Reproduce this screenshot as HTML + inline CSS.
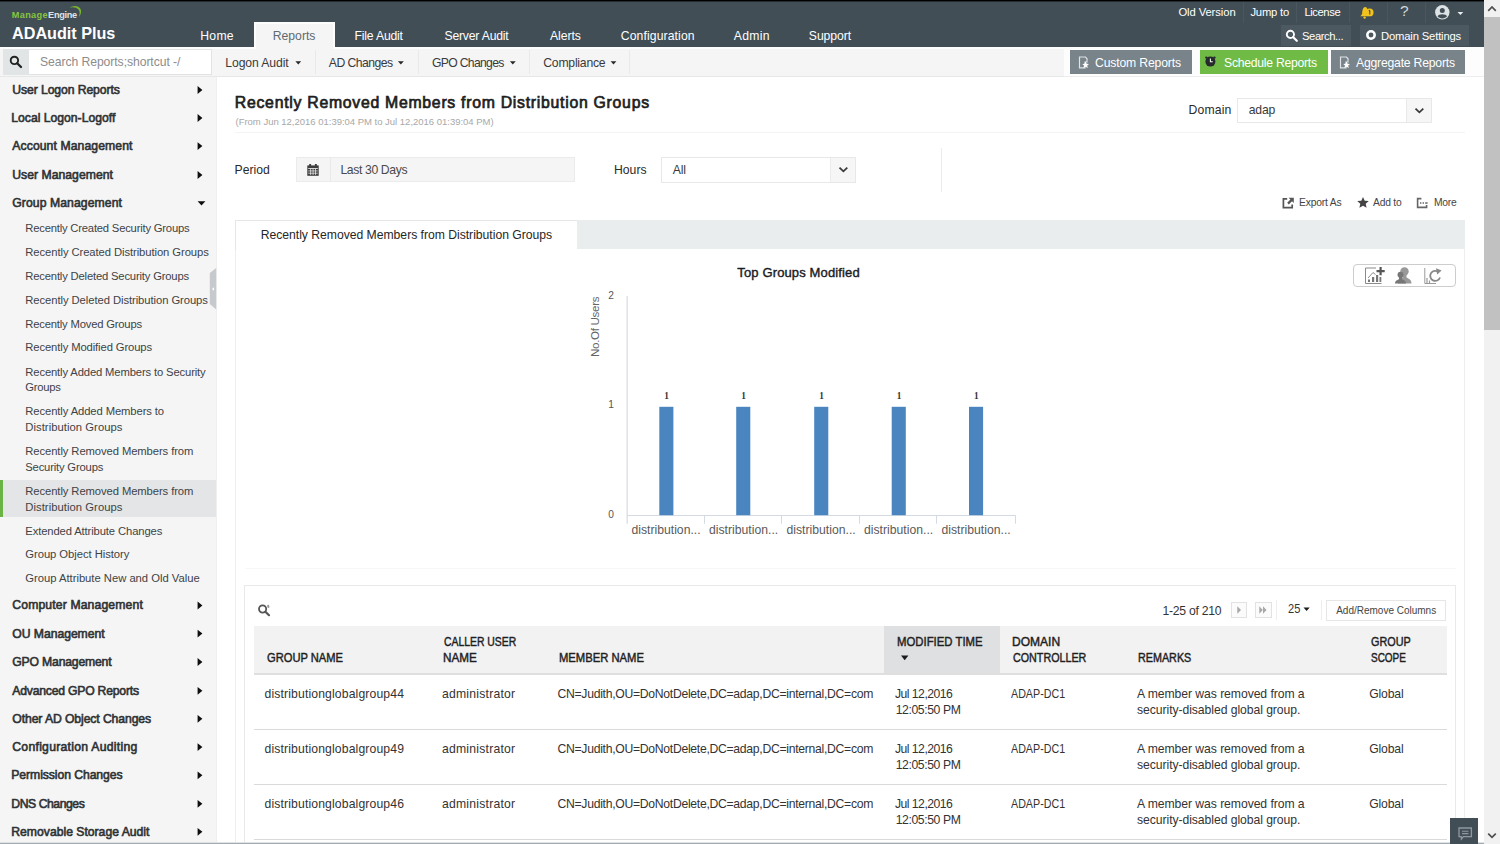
<!DOCTYPE html>
<html lang="en">
<head>
<meta charset="utf-8">
<title>ADAudit Plus - Recently Removed Members from Distribution Groups</title>
<style>
*{box-sizing:border-box;margin:0;padding:0}
html,body{width:1500px;height:844px;overflow:hidden;background:#fff}
body{font-family:"Liberation Sans",sans-serif;font-size:13px;color:#222;position:relative}
.a{position:absolute}
.t{position:absolute;white-space:nowrap;line-height:16px;height:16px}
#topline{left:0;top:0;width:1484px;height:2px;background:linear-gradient(#000 0,#000 50%,#242c31 50%,#242c31 100%)}
#hdr{left:0;top:2px;width:1484px;height:45px;background:#424e56}
#tabact{left:254px;top:22px;width:81px;height:25px;background:#f5f5f5;border:2px solid #fdfdfd;border-bottom:0}
.hs{top:2px;width:1px;height:21px;background:#4a575f}
.hbtn{top:25px;height:21px;background:#4c5961}
#sub{left:0;top:47px;width:1484px;height:30px;background:#f5f5f5;border-top:2px solid #fdfdfd;border-bottom:1px solid #e6e7e8}
.sep{top:50px;width:1px;height:24px;background:#e8e9ea}
.car{width:0;height:0;border-left:3px solid transparent;border-right:3px solid transparent;border-top:3.5px solid #2a2a2a}
.btn{top:50px;height:24px}
#side{left:0;top:77px;width:217px;height:767px;background:#f5f5f5;border-right:1px solid #efefef}
#sel{left:0;top:480px;width:216px;height:37px;background:#e4e5e6;border-left:3px solid #6ab344}
.sa{left:197.6px;width:0;height:0;border-top:3.7px solid transparent;border-bottom:3.7px solid transparent;border-left:4.8px solid #111}
#sbox{left:3px;top:49px;width:209px;height:26px;background:#fff;border:1px solid #e1e3e4}
#sico{left:3px;top:49px;width:26px;height:26px;background:#e2e5e6}
.box{background:#fff;border:1px solid #e8e8e8}
.hl{height:1px;background:#f4f4f4}
#tabbar{left:235px;top:220px;width:1230px;height:29px;background:#e9edee}
#tab1{left:235px;top:220px;width:342px;height:30px;background:#fff;border-left:1px solid #e6e6e6;border-top:1px solid #e6e6e6}
#cpanel{left:235px;top:249px;width:1230px;height:596px;border-left:1px solid #eeeeee;border-right:1px solid #eeeeee}
#tpanel{left:244px;top:585px;width:1212px;height:270px;border:1px solid #e9e9e9}
.rl{left:254px;width:1193px;height:1px;background:#dadada}
#sb{left:1484px;top:0;width:16px;height:844px;background:#f1f1f1}
#sbt{left:1484px;top:17px;width:16px;height:313px;background:#c1c1c1}
</style>
</head>
<body>
<header>
<div class="a" id="hdr"></div>
<div class="a" id="topline"></div>
<div class="a" id="tabact"></div>
<div class="a hs" style="left:1243px"></div><div class="a hs" style="left:1296px"></div><div class="a hs" style="left:1349px"></div><div class="a hs" style="left:1387px"></div><div class="a hs" style="left:1425px"></div>
<div class="a hbtn" style="left:1281px;width:70px"></div>
<div class="a hbtn" style="left:1360px;width:109px"></div>
<svg class="a" style="left:66px;top:4px" width="18" height="16" viewBox="66 4 18 16"><path d="M69.3 7.6 Q74 5.2 77.6 6.4 Q82.4 8.6 80.6 14 Q80 15.8 78.8 17 Q80.6 12.6 78.6 9.6 Q76 6.4 69.3 7.6 Z" fill="#7ab929"/></svg>
<!-- header icons -->
<svg class="a" style="left:1359px;top:5px" width="16" height="16" viewBox="0 0 16 16"><path d="M6.2 2 C3.6 2.6 3.4 5.5 3.2 8 C3.1 9.6 2.2 10.4 1.4 11.2 H9.4 C8.4 9.5 9 7 8.6 5 C8.3 3.4 7.6 2.3 6.2 2 Z" fill="#f2c31c"/><circle cx="5.6" cy="12.6" r="1.2" fill="#f2c31c"/><circle cx="10.6" cy="7.4" r="3.9" fill="#f2c31c"/><path d="M10.8 5.2 V9.6 M9.8 6 L10.8 5.2" stroke="#424e56" stroke-width="1.1" fill="none"/></svg>
<div class="t" style="left:1400px;top:3px;font-size:15.5px;color:#d3d9dc">?</div>
<svg class="a" style="left:1435px;top:5px" width="30" height="15" viewBox="0 0 30 15"><circle cx="7.3" cy="7.3" r="7.2" fill="#dde2e5"/><circle cx="7.3" cy="5.6" r="2.5" fill="#424e56"/><path d="M2.6 11.6 C3.2 8.6 11.4 8.6 12 11.6 C10 14 4.6 14 2.6 11.6 Z" fill="#424e56"/><path d="M22.5 7 H28.3 L25.4 10 Z" fill="#e8ecee"/></svg>
<svg class="a" style="left:1285px;top:29px" width="14" height="14" viewBox="0 0 14 14"><circle cx="5.4" cy="5.4" r="3.6" fill="none" stroke="#fff" stroke-width="1.9"/><path d="M8.2 8.2 L11.8 11.8" stroke="#fff" stroke-width="2.2" stroke-linecap="round"/></svg>
<svg class="a" style="left:1365px;top:29px" width="12" height="12" viewBox="0 0 12 12"><circle cx="6" cy="6" r="3.7" fill="none" stroke="#fff" stroke-width="2.5"/></svg>

<div class="t" style="left:200.30px;top:27.77px;font-size:12.2px;letter-spacing:0.256px;color:#ffffff">Home</div>
<div class="t" style="left:354.50px;top:27.77px;font-size:12.2px;letter-spacing:-0.180px;color:#ffffff">File Audit</div>
<div class="t" style="left:444.50px;top:27.77px;font-size:12.2px;letter-spacing:-0.198px;color:#ffffff">Server Audit</div>
<div class="t" style="left:550.00px;top:27.77px;font-size:12.2px;letter-spacing:-0.052px;color:#ffffff">Alerts</div>
<div class="t" style="left:620.80px;top:27.77px;font-size:12.2px;letter-spacing:0.107px;color:#ffffff">Configuration</div>
<div class="t" style="left:733.80px;top:27.77px;font-size:12.2px;letter-spacing:0.308px;color:#ffffff">Admin</div>
<div class="t" style="left:808.80px;top:27.77px;font-size:12.2px;letter-spacing:-0.050px;color:#ffffff">Support</div>
<div class="t" style="left:272.80px;top:27.77px;font-size:12.2px;letter-spacing:-0.013px;color:#5f6a70">Reports</div>
<div class="t" style="left:1178.40px;top:3.80px;font-size:11.25px;letter-spacing:-0.090px;color:#ffffff">Old Version</div>
<div class="t" style="left:1250.40px;top:3.80px;font-size:11.25px;letter-spacing:-0.193px;color:#ffffff">Jump to</div>
<div class="t" style="left:1304.40px;top:3.80px;font-size:11.25px;letter-spacing:-0.420px;color:#ffffff">License</div>
<div class="t" style="left:1302.00px;top:27.60px;font-size:11.25px;letter-spacing:-0.437px;color:#ffffff">Search...</div>
<div class="t" style="left:1381.00px;top:27.60px;font-size:11.25px;letter-spacing:-0.165px;color:#ffffff">Domain Settings</div>
<div class="t" style="left:11.70px;top:6.61px;font-size:9.2px;letter-spacing:0.341px;color:#86c440;font-weight:bold">Manage</div>
<div class="t" style="left:48.10px;top:6.61px;font-size:9.2px;letter-spacing:-0.323px;color:#dde3e6;font-weight:bold">Engine</div>
<div class="t" style="left:12.10px;top:24.79px;font-size:16.2px;letter-spacing:-0.019px;color:#ffffff;font-weight:bold">ADAudit Plus</div>
</header>
<nav>
<div class="a" id="sub"></div>
<div class="a" style="left:256px;top:47px;width:77px;height:2px;background:#f5f5f5"></div>
<div class="a" id="sbox"></div><div class="a" id="sico"></div>
<svg class="a" style="left:9px;top:55px" width="14" height="14" viewBox="0 0 14 14"><circle cx="5.4" cy="5.4" r="3.7" fill="none" stroke="#222" stroke-width="1.9"/><path d="M8.2 8.2 L12 12" stroke="#222" stroke-width="2.3" stroke-linecap="round"/></svg>
<div class="a sep" style="left:315px"></div><div class="a sep" style="left:418px"></div><div class="a sep" style="left:529px"></div><div class="a sep" style="left:629px"></div>

<div class="a" style="left:1064px;top:47px;width:420px;height:30px;background:#fdfdfd;border-bottom:1px solid #ededed"></div>
<div class="a btn" style="left:1070px;width:122px;background:#78838a"></div>
<div class="a btn" style="left:1200px;width:128px;background:#6fbb45"></div>
<div class="a btn" style="left:1331px;width:134px;background:#78838a"></div>
<svg class="a" style="left:1078px;top:56px" width="12" height="13" viewBox="0 0 12 13"><path d="M1.5 1 H7.5 L9 2.8 V6 H7 V11.8 H1.5 Z" fill="none" stroke="#dfe3e6" stroke-width="1.2"/><path d="M7.6 5.6 L8.6 7.8 L11 8 L9.2 9.6 L9.8 12 L7.6 10.7 L5.4 12 L6 9.6 L4.2 8 L6.6 7.8 Z" fill="#fff"/></svg>
<svg class="a" style="left:1339px;top:56px" width="12" height="13" viewBox="0 0 12 13"><path d="M1.5 1 H7.5 L9 2.8 V6 H7 V11.8 H1.5 Z" fill="none" stroke="#dfe3e6" stroke-width="1.2"/><path d="M7.6 5.6 L8.6 7.8 L11 8 L9.2 9.6 L9.8 12 L7.6 10.7 L5.4 12 L6 9.6 L4.2 8 L6.6 7.8 Z" fill="#fff"/></svg>
<svg class="a" style="left:1204px;top:55px" width="13" height="13" viewBox="0 0 13 13"><circle cx="6.4" cy="6.6" r="5" fill="#26292b"/><circle cx="2.4" cy="2.6" r="1.2" fill="#26292b"/><circle cx="10.4" cy="2.6" r="1.2" fill="#26292b"/><path d="M6.4 3.6 V6.8 H8.8" stroke="#eef6e8" stroke-width="1.1" fill="none"/></svg>

<svg class="a" style="left:290px;top:58px" width="330" height="10" viewBox="290 58 330 10"><path d="M295.4 61.2 H301.2 L298.3 64.6 Z M397.9 61.2 H403.8 L400.85 64.6 Z M509.9 61.2 H515.7 L512.8 64.6 Z M610.6 61.2 H616.4 L613.5 64.6 Z" fill="#2a2a2a"/></svg>
<div class="t" style="left:225.30px;top:54.77px;font-size:12.2px;letter-spacing:-0.097px;color:#3a3a3a">Logon Audit</div>
<div class="t" style="left:328.80px;top:54.77px;font-size:12.2px;letter-spacing:-0.534px;color:#3a3a3a">AD Changes</div>
<div class="t" style="left:432.00px;top:54.77px;font-size:12.2px;letter-spacing:-0.687px;color:#3a3a3a">GPO Changes</div>
<div class="t" style="left:543.30px;top:54.77px;font-size:12.2px;letter-spacing:-0.231px;color:#3a3a3a">Compliance</div>
<div class="t" style="left:40.00px;top:54.27px;font-size:12.2px;letter-spacing:-0.074px;color:#8c8c8c">Search Reports;shortcut -/</div>
<div class="t" style="left:1095.00px;top:54.77px;font-size:12.2px;letter-spacing:-0.150px;color:#ffffff">Custom Reports</div>
<div class="t" style="left:1224.00px;top:54.77px;font-size:12.2px;letter-spacing:-0.252px;color:#ffffff">Schedule Reports</div>
<div class="t" style="left:1356.00px;top:54.77px;font-size:12.2px;letter-spacing:-0.201px;color:#ffffff">Aggregate Reports</div>
</nav>
<aside>
<div class="a" id="side"></div>
<div class="a" id="sel"></div>
<svg class="a" style="left:0;top:0" width="217" height="844" viewBox="0 0 217 844"><path d="M197.6 86.1 L202.4 90.0 L197.6 93.9 Z M197.6 114.1 L202.4 118.0 L197.6 121.9 Z M197.6 142.2 L202.4 146.1 L197.6 150.0 Z M197.6 171.1 L202.4 175.0 L197.6 178.9 Z M197.6 601.6 L202.4 605.5 L197.6 609.4 Z M197.6 629.7 L202.4 633.6 L197.6 637.5 Z M197.6 658.1 L202.4 662.0 L197.6 665.9 Z M197.6 686.9 L202.4 690.8 L197.6 694.7 Z M197.6 714.9 L202.4 718.8 L197.6 722.7 Z M197.6 743.2 L202.4 747.1 L197.6 751.0 Z M197.6 771.4 L202.4 775.3 L197.6 779.2 Z M197.6 799.9 L202.4 803.8 L197.6 807.7 Z M197.6 827.9 L202.4 831.8 L197.6 835.7 Z M197.6 201.3 H205.4 L201.5 205.4 Z" fill="#0f0f0f"/></svg>
<svg class="a" style="left:209px;top:268px" width="8" height="42" viewBox="0 0 8 42"><path d="M7.2 0 L0.8 5 V36 L7.2 41.5 Z" fill="#c6cacd"/><path d="M5 19.2 L3 21 L5 22.8 Z" fill="#fff"/></svg>

<div class="t" style="left:12.30px;top:81.97px;font-size:12.2px;letter-spacing:-0.093px;color:#2f3234;-webkit-text-stroke:0.6px #2f3234">User Logon Reports</div>
<div class="t" style="left:11.30px;top:109.97px;font-size:12.2px;letter-spacing:-0.009px;color:#2f3234;-webkit-text-stroke:0.6px #2f3234">Local Logon-Logoff</div>
<div class="t" style="left:12.30px;top:138.07px;font-size:12.2px;letter-spacing:0.090px;color:#2f3234;-webkit-text-stroke:0.6px #2f3234">Account Management</div>
<div class="t" style="left:12.30px;top:166.97px;font-size:12.2px;letter-spacing:0.024px;color:#2f3234;-webkit-text-stroke:0.6px #2f3234">User Management</div>
<div class="t" style="left:12.30px;top:195.27px;font-size:12.2px;letter-spacing:0.079px;color:#2f3234;-webkit-text-stroke:0.6px #2f3234">Group Management</div>
<div class="t" style="left:12.30px;top:597.47px;font-size:12.2px;letter-spacing:0.136px;color:#2f3234;-webkit-text-stroke:0.6px #2f3234">Computer Management</div>
<div class="t" style="left:12.30px;top:625.57px;font-size:12.2px;letter-spacing:-0.043px;color:#2f3234;-webkit-text-stroke:0.6px #2f3234">OU Management</div>
<div class="t" style="left:12.30px;top:653.97px;font-size:12.2px;letter-spacing:-0.179px;color:#2f3234;-webkit-text-stroke:0.6px #2f3234">GPO Management</div>
<div class="t" style="left:12.30px;top:682.77px;font-size:12.2px;letter-spacing:-0.213px;color:#2f3234;-webkit-text-stroke:0.6px #2f3234">Advanced GPO Reports</div>
<div class="t" style="left:12.30px;top:710.77px;font-size:12.2px;letter-spacing:-0.095px;color:#2f3234;-webkit-text-stroke:0.6px #2f3234">Other AD Object Changes</div>
<div class="t" style="left:12.30px;top:739.07px;font-size:12.2px;letter-spacing:0.274px;color:#2f3234;-webkit-text-stroke:0.6px #2f3234">Configuration Auditing</div>
<div class="t" style="left:11.30px;top:767.27px;font-size:12.2px;letter-spacing:-0.068px;color:#2f3234;-webkit-text-stroke:0.6px #2f3234">Permission Changes</div>
<div class="t" style="left:11.30px;top:795.77px;font-size:12.2px;letter-spacing:-0.441px;color:#2f3234;-webkit-text-stroke:0.6px #2f3234">DNS Changes</div>
<div class="t" style="left:11.30px;top:823.77px;font-size:12.2px;letter-spacing:-0.004px;color:#2f3234;-webkit-text-stroke:0.6px #2f3234">Removable Storage Audit</div>
<div class="t" style="left:25.30px;top:220.10px;font-size:11.25px;letter-spacing:-0.206px;color:#404345">Recently Created Security Groups</div>
<div class="t" style="left:25.30px;top:243.90px;font-size:11.25px;letter-spacing:-0.080px;color:#404345">Recently Created Distribution Groups</div>
<div class="t" style="left:25.30px;top:268.10px;font-size:11.25px;letter-spacing:-0.182px;color:#404345">Recently Deleted Security Groups</div>
<div class="t" style="left:25.30px;top:291.80px;font-size:11.25px;letter-spacing:-0.070px;color:#404345">Recently Deleted Distribution Groups</div>
<div class="t" style="left:25.30px;top:315.90px;font-size:11.25px;letter-spacing:-0.193px;color:#404345">Recently Moved Groups</div>
<div class="t" style="left:25.30px;top:339.30px;font-size:11.25px;letter-spacing:-0.113px;color:#404345">Recently Modified Groups</div>
<div class="t" style="left:25.30px;top:363.90px;font-size:11.25px;letter-spacing:-0.142px;color:#404345">Recently Added Members to Security</div>
<div class="t" style="left:25.30px;top:379.40px;font-size:11.25px;letter-spacing:-0.253px;color:#404345">Groups</div>
<div class="t" style="left:25.30px;top:403.40px;font-size:11.25px;letter-spacing:-0.104px;color:#404345">Recently Added Members to</div>
<div class="t" style="left:25.30px;top:418.90px;font-size:11.25px;letter-spacing:0.046px;color:#404345">Distribution Groups</div>
<div class="t" style="left:25.30px;top:443.40px;font-size:11.25px;letter-spacing:-0.093px;color:#404345">Recently Removed Members from</div>
<div class="t" style="left:25.30px;top:458.90px;font-size:11.25px;letter-spacing:-0.188px;color:#404345">Security Groups</div>
<div class="t" style="left:25.30px;top:483.10px;font-size:11.25px;letter-spacing:-0.093px;color:#404345">Recently Removed Members from</div>
<div class="t" style="left:25.30px;top:498.60px;font-size:11.25px;letter-spacing:0.046px;color:#404345">Distribution Groups</div>
<div class="t" style="left:25.30px;top:522.80px;font-size:11.25px;letter-spacing:-0.124px;color:#404345">Extended Attribute Changes</div>
<div class="t" style="left:25.30px;top:546.40px;font-size:11.25px;letter-spacing:-0.053px;color:#404345">Group Object History</div>
<div class="t" style="left:25.30px;top:570.30px;font-size:11.25px;letter-spacing:-0.017px;color:#404345">Group Attribute New and Old Value</div>
</aside>
<main>
<!-- main -->
<div class="a box" style="left:1237px;top:98px;width:195px;height:25px"></div>
<div class="a" style="left:1406px;top:99px;width:25px;height:23px;background:#f6f6f6;border-left:1px solid #e9e9e9"></div>
<svg class="a" style="left:1413.5px;top:106.5px" width="11" height="8" viewBox="0 0 11 8"><path d="M1.5 1.6 L5.4 5.3 L9.3 1.6" fill="none" stroke="#3a3a3a" stroke-width="1.8"/></svg>
<div class="a hl" style="left:235px;top:132px;width:1230px"></div>
<div class="a" style="left:296px;top:157px;width:279px;height:25px;background:#f5f5f5;border:1px solid #ebebeb"></div>
<div class="a" style="left:330px;top:158px;width:1px;height:23px;background:#e9e9e9"></div>
<svg class="a" style="left:307px;top:164px" width="12" height="12" viewBox="0 0 12 12"><rect x="0.3" y="1.4" width="11.4" height="10.4" fill="#3d3d3d"/><rect x="2.2" y="0" width="1.9" height="3" fill="#3d3d3d"/><rect x="7.9" y="0" width="1.9" height="3" fill="#3d3d3d"/><g fill="#f5f5f5"><rect x="1.2" y="4.2" width="9.6" height="0.8"/><rect x="3.4" y="4.6" width=".7" height="6.4"/><rect x="5.7" y="4.6" width=".7" height="6.4"/><rect x="8" y="4.6" width=".7" height="6.4"/><rect x="1.2" y="6.6" width="9.6" height=".7"/><rect x="1.2" y="8.8" width="9.6" height=".7"/></g></svg>
<div class="a box" style="left:661px;top:157px;width:195px;height:26px"></div>
<div class="a" style="left:830px;top:158px;width:25px;height:24px;background:#f6f6f6;border-left:1px solid #ececec"></div>
<svg class="a" style="left:838px;top:166px" width="11" height="8" viewBox="0 0 11 8"><path d="M1.5 1.6 L5.4 5.3 L9.3 1.6" fill="none" stroke="#3a3a3a" stroke-width="1.8"/></svg>
<div class="a" style="left:941px;top:148px;width:1px;height:44px;background:#ececec"></div>
<!-- action icons -->
<svg class="a" style="left:1282px;top:197px" width="13" height="12" viewBox="0 0 13 12"><path d="M5.2 1.8 H1.4 V10.6 H10.2 V7.4" fill="none" stroke="#555" stroke-width="1.7"/><path d="M6.6 0.8 H11.8 V6 L10 4.2 L6.8 7.4 L5.2 5.8 L8.4 2.6 Z" fill="#555"/></svg>
<svg class="a" style="left:1357px;top:197px" width="12" height="11" viewBox="0 0 12 11"><path d="M6 0 L7.7 3.7 L11.8 4.1 L8.7 6.8 L9.6 10.8 L6 8.7 L2.4 10.8 L3.3 6.8 L0.2 4.1 L4.3 3.7 Z" fill="#444"/></svg>
<svg class="a" style="left:1416px;top:197px" width="13" height="12" viewBox="0 0 13 12"><path d="M5.4 1.6 H1.6 V10.4 H10.6 V8" fill="none" stroke="#666" stroke-width="1.6"/><path d="M4 6 H5.4 M6.6 6 H8 M9.2 6 H11.6" stroke="#666" stroke-width="1.5"/></svg>

<div class="a" id="tabbar"></div><div class="a" id="cpanel"></div><div class="a" id="tab1"></div>
<svg class="a" style="left:580px;top:255px" width="470" height="295" viewBox="580 255 470 295" font-family="Liberation Sans, sans-serif"><text x="737.3" y="276.6" font-size="13" fill="#1a1c24" stroke="#1a1c24" stroke-width="0.4" textLength="122.4" lengthAdjust="spacing">Top Groups Modified</text><text transform="translate(598.6,357) rotate(-90)" font-size="11.6" fill="#666" textLength="60.5" lengthAdjust="spacing">No.Of Users</text><path d="M627.2 296 V523.7" stroke="#dfe3ea" stroke-width="1.6" fill="none"/><path d="M627 515.5 H1015.5 M704.5 515.5 V523.7 M781.5 515.5 V523.7 M859.5 515.5 V523.7 M936.5 515.5 V523.7 M1015.5 515.5 V523.7" stroke="#d3dae3" stroke-width="1" fill="none"/><text x="611.2" y="298.6" text-anchor="middle" font-size="10.2" fill="#555">2</text><text x="611.2" y="407.9" text-anchor="middle" font-size="10.2" fill="#555">1</text><text x="611.2" y="518.4" text-anchor="middle" font-size="10.2" fill="#555">0</text><rect x="659.3" y="406.8" width="14.1" height="108.4" fill="#4a85c0"/><text x="666.6999999999999" y="399" text-anchor="middle" font-size="9.3" font-weight="bold" fill="#333" font-family="Liberation Serif, serif">1</text><rect x="736.2" y="406.8" width="14.1" height="108.4" fill="#4a85c0"/><text x="743.6" y="399" text-anchor="middle" font-size="9.3" font-weight="bold" fill="#333" font-family="Liberation Serif, serif">1</text><rect x="814.2" y="406.8" width="14.1" height="108.4" fill="#4a85c0"/><text x="821.6" y="399" text-anchor="middle" font-size="9.3" font-weight="bold" fill="#333" font-family="Liberation Serif, serif">1</text><rect x="891.7" y="406.8" width="14.1" height="108.4" fill="#4a85c0"/><text x="899.1" y="399" text-anchor="middle" font-size="9.3" font-weight="bold" fill="#333" font-family="Liberation Serif, serif">1</text><rect x="969" y="406.8" width="14.1" height="108.4" fill="#4a85c0"/><text x="976.4" y="399" text-anchor="middle" font-size="9.3" font-weight="bold" fill="#333" font-family="Liberation Serif, serif">1</text><text x="631.4" y="533.9" font-size="12.2" fill="#5a5a5a" textLength="69.2" lengthAdjust="spacing">distribution...</text><text x="709" y="533.9" font-size="12.2" fill="#5a5a5a" textLength="69.2" lengthAdjust="spacing">distribution...</text><text x="786.5" y="533.9" font-size="12.2" fill="#5a5a5a" textLength="69.2" lengthAdjust="spacing">distribution...</text><text x="864" y="533.9" font-size="12.2" fill="#5a5a5a" textLength="69.2" lengthAdjust="spacing">distribution...</text><text x="941.5" y="533.9" font-size="12.2" fill="#5a5a5a" textLength="69.2" lengthAdjust="spacing">distribution...</text></svg>
<div class="a" style="left:1353px;top:264px;width:103px;height:23px;border:1px solid #cdcdcd;border-radius:4px;background:#fff"></div>
<svg class="a" style="left:1364px;top:265.5px" width="80" height="20" viewBox="0 0 80 20"><g fill="none" stroke="#8a8a8a"><path d="M1.5 2 V17.5 H17.5" stroke-width="1"/><path d="M1.5 2 H12" stroke-width="1"/><path d="M4 12 L9 6.5 L11.5 8.5" stroke-width="1"/></g><g fill="#777"><rect x="4" y="13.5" width="2" height="2.5"/><rect x="8" y="11" width="2.2" height="5"/><rect x="12" y="9" width="2.2" height="7"/><rect x="15.5" y="11" width="1.8" height="5"/><path d="M15.5 1 H17.7 V4 H20.7 V6.2 H17.7 V9.2 H15.5 V6.2 H12.5 V4 H15.5 Z" fill="#555"/></g><g fill="#999"><circle cx="40.5" cy="5.5" r="4.2"/><path d="M34 17.5 C34 13 37 12.5 38.5 11.5 V9 H42.5 V11.5 C44 12.5 47.5 13 47.5 17.5 Z"/></g><g fill="#777"><circle cx="36.5" cy="8.8" r="3"/><path d="M31 17.5 C31 14.5 33.5 14 35 13.2 V11 H38 V13.2 C39.5 14 42 14.5 42 17.5 Z"/></g><g fill="none" stroke="#9a9a9a"><path d="M60.8 2 V17.5 H72" stroke-width="1"/><path d="M63 17 V12 M65.5 17 V14.5" stroke-width="1.2"/><path d="M74.6 6.2 A5 5 0 1 0 76 11.5" stroke="#888" stroke-width="1.8"/></g><path d="M72 2.2 L77.6 4.6 L73.2 8.4 Z" fill="#888"/></svg>
<div class="a hl" style="left:245px;top:568px;width:1211px;background:#f7f7f7"></div>
<div class="a" id="tpanel"></div>
<svg class="a" style="left:257px;top:603px" width="15" height="14" viewBox="0 0 15 14"><circle cx="5.6" cy="6" r="3.6" fill="none" stroke="#555" stroke-width="1.8"/><path d="M8.4 8.8 L12 12.2" stroke="#555" stroke-width="2.2" stroke-linecap="round"/><ellipse cx="11.3" cy="3.4" rx="1.1" ry="1.6" fill="#9a9a9a" transform="rotate(-15 11.3 3.4)"/></svg>
<div class="a" style="left:1231px;top:602px;width:16px;height:16px;border:1px solid #e2e2e2;background:#fbfbfb"></div>
<div class="a" style="left:1255px;top:602px;width:17px;height:16px;border:1px solid #e2e2e2;background:#fbfbfb"></div>
<svg class="a" style="left:1231px;top:602px" width="42" height="16" viewBox="0 0 42 16"><path d="M6.3 4.3 L10 8 L6.3 11.7 Z M28.3 4.3 L31.8 8 L28.3 11.7 Z M32 4.3 L35.5 8 L32 11.7 Z" fill="#a8a8a8"/></svg>
<div class="a" style="left:1276px;top:600px;width:1px;height:20px;background:#eee"></div>
<div class="a" style="left:1321px;top:600px;width:1px;height:20px;background:#eee"></div>

<div class="a" style="left:1326px;top:600px;width:120px;height:21px;border:1px solid #e6e6e6;background:#fff"></div>
<div class="a" style="left:254px;top:626px;width:1193px;height:48px;background:#f2f2f2"></div>
<div class="a" style="left:884px;top:626px;width:116px;height:48px;background:#dfe0e1"></div>
<div class="a" style="left:254px;top:673px;width:1193px;height:2px;background:#dfdfdf"></div>

<div class="a rl" style="top:729px"></div><div class="a rl" style="top:784px"></div><div class="a rl" style="top:839px"></div>
<svg class="a" style="left:895px;top:600px" width="420" height="65" viewBox="895 600 420 65"><path d="M901 655.6 H908.4 L904.7 660.2 Z M1303.5 607.6 H1309.7 L1306.6 611 Z" fill="#1c1c1c"/></svg>
<div class="t" style="left:234.85px;top:94.83px;font-size:15.8px;letter-spacing:0.728px;color:#1e1e1e;-webkit-text-stroke:0.7px #1e1e1e">Recently Removed Members from Distribution Groups</div>
<div class="t" style="left:235.50px;top:114.01px;font-size:9.5px;letter-spacing:-0.011px;color:#a8a8a8">(From Jun 12,2016 01:39:04 PM to Jul 12,2016 01:39:04 PM)</div>
<div class="t" style="left:1188.50px;top:102.27px;font-size:12.2px;letter-spacing:0.156px;color:#2a2a2a">Domain</div>
<div class="t" style="left:1248.70px;top:102.27px;font-size:12.2px;letter-spacing:-0.178px;color:#3a3a3a">adap</div>
<div class="t" style="left:234.50px;top:162.17px;font-size:12.2px;letter-spacing:0.010px;color:#2a2a2a">Period</div>
<div class="t" style="left:340.40px;top:161.57px;font-size:12.2px;letter-spacing:-0.367px;color:#4a4a4a">Last 30 Days</div>
<div class="t" style="left:614.00px;top:162.17px;font-size:12.2px;letter-spacing:0.021px;color:#2a2a2a">Hours</div>
<div class="t" style="left:672.70px;top:162.07px;font-size:12.2px;letter-spacing:-0.168px;color:#3a3a3a">All</div>
<div class="t" style="left:1299.00px;top:195.23px;font-size:10.3px;letter-spacing:-0.186px;color:#444">Export As</div>
<div class="t" style="left:1373.00px;top:195.23px;font-size:10.3px;letter-spacing:-0.209px;color:#444">Add to</div>
<div class="t" style="left:1434.00px;top:195.23px;font-size:10.3px;letter-spacing:-0.244px;color:#444">More</div>
<div class="t" style="left:260.70px;top:227.27px;font-size:12.2px;letter-spacing:-0.025px;color:#262626">Recently Removed Members from Distribution Groups</div>
<div class="t" style="left:1162.50px;top:602.77px;font-size:12.2px;letter-spacing:-0.269px;color:#333">1-25 of 210</div>
<div class="t" style="left:1288.00px;top:601.03px;font-size:12.6px;color:#333;transform:scaleX(0.8783);transform-origin:0 50%">25</div>
<div class="t" style="left:1336.20px;top:602.74px;font-size:10.0px;letter-spacing:-0.003px;color:#444">Add/Remove Columns</div>
<div class="t" style="left:266.90px;top:649.67px;font-size:12.5px;color:#1f1f1f;transform:scaleX(0.8920);transform-origin:0 50%;-webkit-text-stroke:0.45px #1f1f1f">GROUP NAME</div>
<div class="t" style="left:443.89px;top:634.17px;font-size:12.5px;color:#1f1f1f;transform:scaleX(0.8309);transform-origin:0 50%;-webkit-text-stroke:0.45px #1f1f1f">CALLER USER</div>
<div class="t" style="left:442.97px;top:649.67px;font-size:12.5px;color:#1f1f1f;transform:scaleX(0.9368);transform-origin:0 50%;-webkit-text-stroke:0.45px #1f1f1f">NAME</div>
<div class="t" style="left:558.80px;top:649.67px;font-size:12.5px;color:#1f1f1f;transform:scaleX(0.8999);transform-origin:0 50%;-webkit-text-stroke:0.45px #1f1f1f">MEMBER NAME</div>
<div class="t" style="left:896.80px;top:634.17px;font-size:12.5px;color:#1f1f1f;transform:scaleX(0.9086);transform-origin:0 50%;-webkit-text-stroke:0.45px #1f1f1f">MODIFIED TIME</div>
<div class="t" style="left:1012.26px;top:634.17px;font-size:12.5px;color:#1f1f1f;transform:scaleX(0.9611);transform-origin:0 50%;-webkit-text-stroke:0.45px #1f1f1f">DOMAIN</div>
<div class="t" style="left:1013.19px;top:649.67px;font-size:12.5px;color:#1f1f1f;transform:scaleX(0.8584);transform-origin:0 50%;-webkit-text-stroke:0.45px #1f1f1f">CONTROLLER</div>
<div class="t" style="left:1138.03px;top:649.67px;font-size:12.5px;color:#1f1f1f;transform:scaleX(0.8617);transform-origin:0 50%;-webkit-text-stroke:0.45px #1f1f1f">REMARKS</div>
<div class="t" style="left:1370.89px;top:634.17px;font-size:12.5px;color:#1f1f1f;transform:scaleX(0.8662);transform-origin:0 50%;-webkit-text-stroke:0.45px #1f1f1f">GROUP</div>
<div class="t" style="left:1370.88px;top:649.67px;font-size:12.5px;color:#1f1f1f;transform:scaleX(0.7977);transform-origin:0 50%;-webkit-text-stroke:0.45px #1f1f1f">SCOPE</div>
<div class="t" style="left:264.50px;top:685.97px;font-size:12.2px;letter-spacing:0.137px;color:#333">distributionglobalgroup44</div>
<div class="t" style="left:442.00px;top:685.97px;font-size:12.2px;letter-spacing:0.218px;color:#333">administrator</div>
<div class="t" style="left:557.50px;top:685.97px;font-size:12.2px;letter-spacing:-0.288px;color:#333">CN=Judith,OU=DoNotDelete,DC=adap,DC=internal,DC=com</div>
<div class="t" style="left:895.00px;top:685.97px;font-size:12.2px;letter-spacing:-0.524px;color:#333">Jul 12,2016</div>
<div class="t" style="left:895.70px;top:702.27px;font-size:12.2px;letter-spacing:-0.396px;color:#333">12:05:50 PM</div>
<div class="t" style="left:1011.20px;top:685.97px;font-size:12.2px;color:#333;transform:scaleX(0.8779);transform-origin:0 50%">ADAP-DC1</div>
<div class="t" style="left:1137.00px;top:685.97px;font-size:12.2px;letter-spacing:-0.066px;color:#333">A member was removed from a</div>
<div class="t" style="left:1137.00px;top:702.27px;font-size:12.2px;letter-spacing:-0.064px;color:#333">security-disabled global group.</div>
<div class="t" style="left:1369.20px;top:685.97px;font-size:12.2px;letter-spacing:-0.144px;color:#333">Global</div>
<div class="t" style="left:264.50px;top:740.77px;font-size:12.2px;letter-spacing:0.137px;color:#333">distributionglobalgroup49</div>
<div class="t" style="left:442.00px;top:740.77px;font-size:12.2px;letter-spacing:0.218px;color:#333">administrator</div>
<div class="t" style="left:557.50px;top:740.77px;font-size:12.2px;letter-spacing:-0.288px;color:#333">CN=Judith,OU=DoNotDelete,DC=adap,DC=internal,DC=com</div>
<div class="t" style="left:895.00px;top:740.77px;font-size:12.2px;letter-spacing:-0.524px;color:#333">Jul 12,2016</div>
<div class="t" style="left:895.70px;top:757.07px;font-size:12.2px;letter-spacing:-0.396px;color:#333">12:05:50 PM</div>
<div class="t" style="left:1011.20px;top:740.77px;font-size:12.2px;color:#333;transform:scaleX(0.8779);transform-origin:0 50%">ADAP-DC1</div>
<div class="t" style="left:1137.00px;top:740.77px;font-size:12.2px;letter-spacing:-0.066px;color:#333">A member was removed from a</div>
<div class="t" style="left:1137.00px;top:757.07px;font-size:12.2px;letter-spacing:-0.064px;color:#333">security-disabled global group.</div>
<div class="t" style="left:1369.20px;top:740.77px;font-size:12.2px;letter-spacing:-0.144px;color:#333">Global</div>
<div class="t" style="left:264.50px;top:796.07px;font-size:12.2px;letter-spacing:0.137px;color:#333">distributionglobalgroup46</div>
<div class="t" style="left:442.00px;top:796.07px;font-size:12.2px;letter-spacing:0.218px;color:#333">administrator</div>
<div class="t" style="left:557.50px;top:796.07px;font-size:12.2px;letter-spacing:-0.288px;color:#333">CN=Judith,OU=DoNotDelete,DC=adap,DC=internal,DC=com</div>
<div class="t" style="left:895.00px;top:796.07px;font-size:12.2px;letter-spacing:-0.524px;color:#333">Jul 12,2016</div>
<div class="t" style="left:895.70px;top:812.37px;font-size:12.2px;letter-spacing:-0.396px;color:#333">12:05:50 PM</div>
<div class="t" style="left:1011.20px;top:796.07px;font-size:12.2px;color:#333;transform:scaleX(0.8779);transform-origin:0 50%">ADAP-DC1</div>
<div class="t" style="left:1137.00px;top:796.07px;font-size:12.2px;letter-spacing:-0.066px;color:#333">A member was removed from a</div>
<div class="t" style="left:1137.00px;top:812.37px;font-size:12.2px;letter-spacing:-0.064px;color:#333">security-disabled global group.</div>
<div class="t" style="left:1369.20px;top:796.07px;font-size:12.2px;letter-spacing:-0.144px;color:#333">Global</div>
<div class="a" style="left:0;top:843px;width:1484px;height:1px;background:#a4acb1"></div>
<div class="a" style="left:0;top:842px;width:1484px;height:1px;background:#dfe2e4"></div>
<div class="a" style="left:1450px;top:818px;width:28px;height:26px;background:#424e56"></div>
<svg class="a" style="left:1458px;top:827px" width="15" height="14" viewBox="0 0 15 14"><path d="M1 1 H13.4 V9.6 H5.4 L3.4 12 L3.2 9.6 H1 Z" fill="none" stroke="#8e999f" stroke-width="1.3"/><path d="M4 4.2 H10.4 M4 6.6 H10.4" stroke="#8e999f" stroke-width="1.1"/></svg>
</main>
<div class="a" id="sb"></div><div class="a" id="sbt"></div>
<svg class="a" style="left:1484px;top:0" width="16" height="844" viewBox="0 0 16 844"><path d="M4.2 10.8 L8 7 L11.8 10.8 M4.2 833.6 L8 837.4 L11.8 833.6" fill="none" stroke="#505050" stroke-width="1.7"/></svg>
</body>
</html>
